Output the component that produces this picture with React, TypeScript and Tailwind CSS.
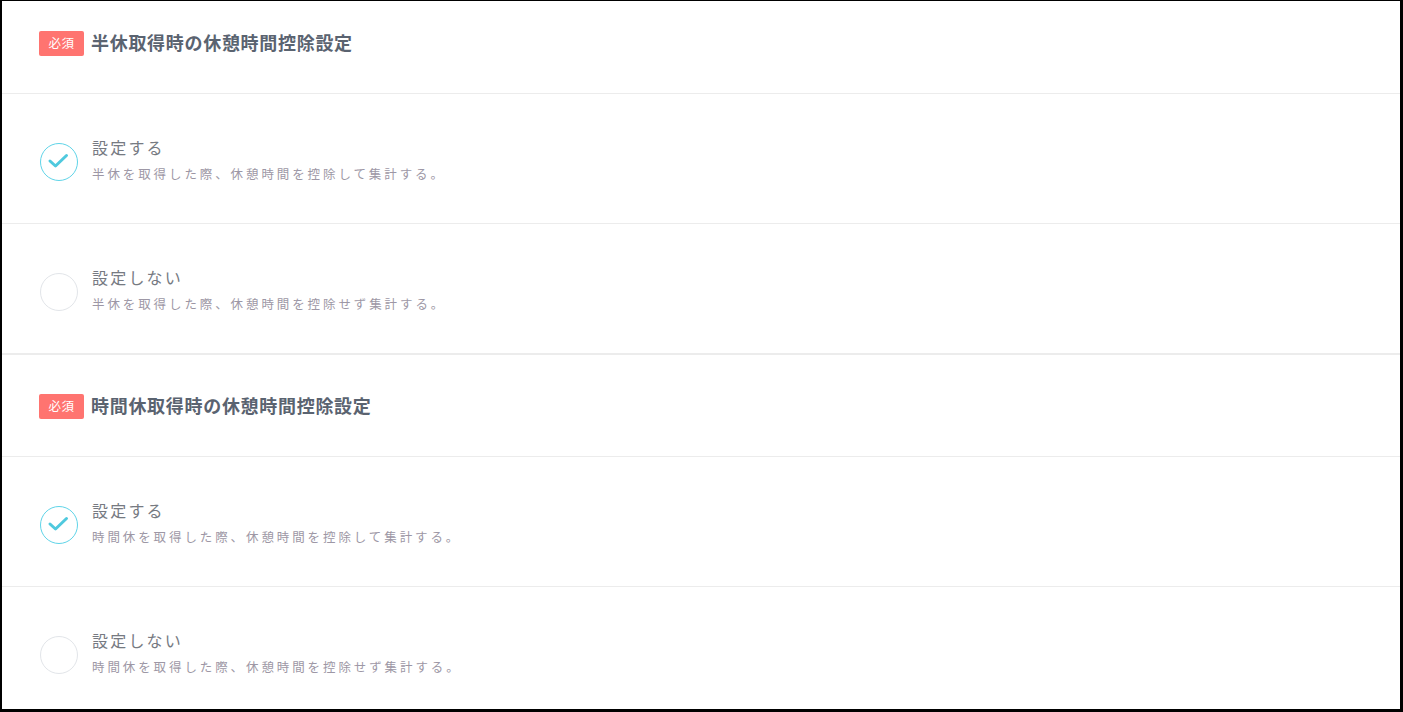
import React from 'react';

const FONT = { fontFamily: '"Noto Sans CJK JP", "Noto Sans", sans-serif' };

type Option = { label: string; desc: string; checked: boolean };

type SectionProps = {
  title: string
  options: Option[]
  first?: boolean
};

function Radio({ checked }: { checked: boolean }) {
  if (!checked) {
    return <div className="w-[38px] h-[38px] shrink-0 rounded-full border border-[#e2e5e9] bg-white" />;
  }
  return (
    <div className="w-[38px] h-[38px] shrink-0 rounded-full border border-[#5fd4e8] bg-white grid place-items-center">
      <svg width="24" height="24" viewBox="0 0 24 24" fill="none">
        <path d="M3 11 L8.5 16 L19.5 5.5" stroke="#4fc9de" strokeWidth="3" strokeLinecap="round" strokeLinejoin="round" />
      </svg>
    </div>
  );
}

function Section({ title, options, first }: SectionProps) {
  return (
    <section className={first ? '' : 'border-t border-[#ececec]'}>
      <div className={`px-[37px] ${first ? 'pt-[30px]' : 'pt-[39px]'} pb-[37px] flex items-center gap-[7px] border-b border-[#ececec]`}>
        <span className="h-[25px] w-[45px] rounded-[2px] bg-[#ff7470] text-white text-[12.5px] grid place-items-center tracking-[0.5px]">必須</span>
        <h2 className="m-0 -mt-[4px] text-[18px] font-bold text-[#5a6370] tracking-[0.7px] leading-none">{title}</h2>
      </div>
      {options.map(o => (
        <div key={o.desc} className="h-[130px] px-[38px] pt-[49px] flex items-start gap-[16px] border-b border-[#ececec]">
          <Radio checked={o.checked} />
          <div className="flex flex-col -mt-[10px] -ml-[2px]">
            <span className="text-[16px] text-[#767a82] tracking-[2.2px] leading-[28px]">{o.label}</span>
            <span className="text-[12.5px] text-[#9d97a5] tracking-[2.9px] leading-[25px]">{o.desc}</span>
          </div>
        </div>
      ))}
    </section>
  );
}

export default function App() {
  return (
    <div style={FONT} className="w-[1403px] h-[712px] box-border overflow-hidden bg-black border-t-[1px] border-l-2 border-r-[3px] border-b-[3px] border-black">
      <div className="h-full bg-white overflow-hidden">
        <Section
          first
          title="半休取得時の休憩時間控除設定"
          options={[
            { label: '設定する', desc: '半休を取得した際、休憩時間を控除して集計する。', checked: true },
            { label: '設定しない', desc: '半休を取得した際、休憩時間を控除せず集計する。', checked: false },
          ]}
        />
        <Section
          title="時間休取得時の休憩時間控除設定"
          options={[
            { label: '設定する', desc: '時間休を取得した際、休憩時間を控除して集計する。', checked: true },
            { label: '設定しない', desc: '時間休を取得した際、休憩時間を控除せず集計する。', checked: false },
          ]}
        />
      </div>
    </div>
  );
}
